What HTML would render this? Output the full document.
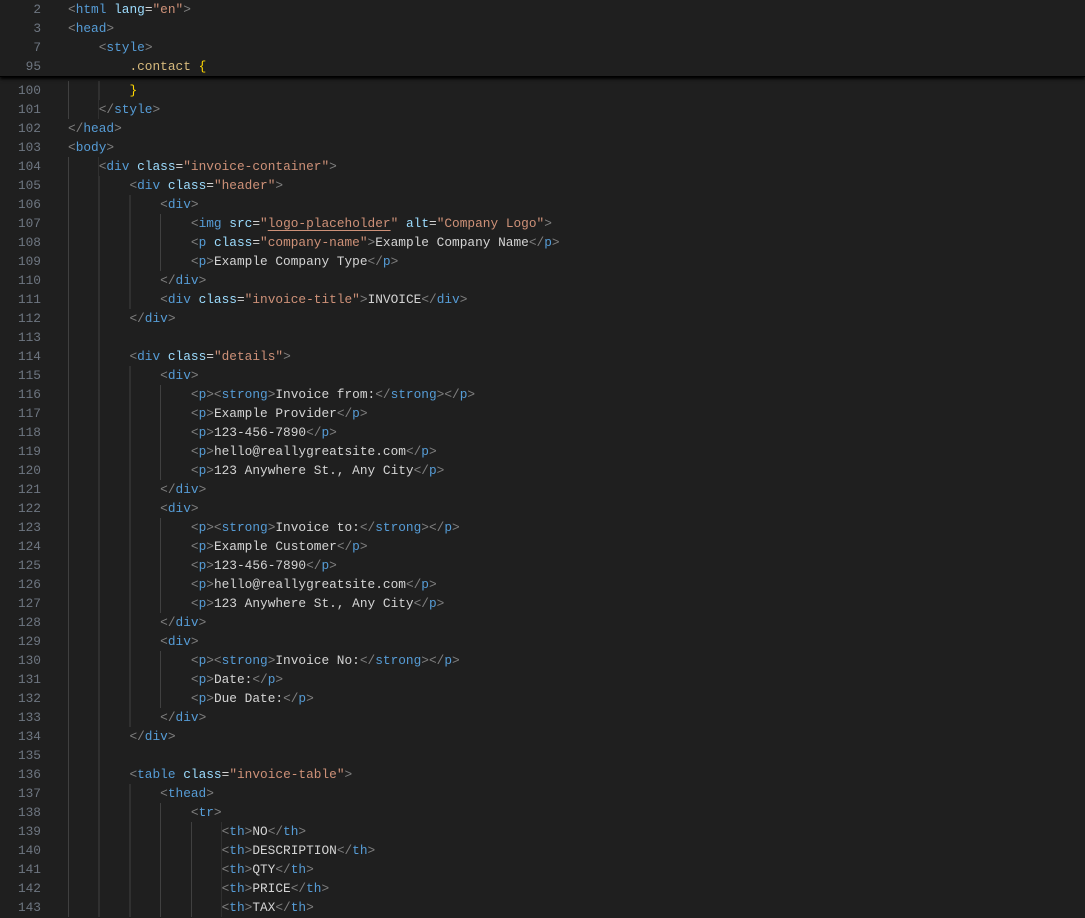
<!DOCTYPE html>
<html><head><meta charset="utf-8"><style>
html,body{margin:0;padding:0;background:#1f1f1f;width:1085px;height:918px;overflow:hidden}
body{font-family:"Liberation Mono",monospace;font-size:12.8px;color:#d4d4d4;position:relative}
.l{height:19px;line-height:19px;white-space:pre;position:relative}
.n{position:absolute;left:0;width:41px;text-align:right;color:#6e7681}
.c{position:absolute;left:68px}
.g{position:absolute;left:68px;top:0;height:19px;background:repeating-linear-gradient(to right,#404040 0 1px,transparent 1px 4ch)}
.t{color:#569cd6}.b{color:#808080}.a{color:#9cdcfe}.s{color:#ce9178}.y{color:#d7ba7d}.k{color:#ffd700}
.sticky{position:absolute;top:0;left:0;width:1085px;height:76px;background:#1f1f1f;z-index:2;box-shadow:0 2px 3px #000;border-bottom:1px solid #000}
.body{position:absolute;top:81px;left:0;width:1085px}
u{text-decoration:underline;text-decoration-color:#ce9178;text-underline-offset:3px}
</style></head><body>
<div class="sticky">
<div class="l"><span class="n">2</span><span class="c"><span class="b">&lt;</span><span class="t">html</span> <span class="a">lang</span>=<span class="s">"en"</span><span class="b">&gt;</span></span></div>
<div class="l"><span class="n">3</span><span class="c"><span class="b">&lt;</span><span class="t">head</span><span class="b">&gt;</span></span></div>
<div class="l"><span class="n">7</span><span class="c">    <span class="b">&lt;</span><span class="t">style</span><span class="b">&gt;</span></span></div>
<div class="l"><span class="n">95</span><span class="c">        <span class="y">.contact</span> <span class="k">{</span></span></div>
</div>
<div class="body">
<div class="l"><span class="n">100</span><span class="g" style="width:8ch"></span><span class="c">        <span class="k">}</span></span></div>
<div class="l"><span class="n">101</span><span class="g" style="width:4ch"></span><span class="c">    <span class="b">&lt;/</span><span class="t">style</span><span class="b">&gt;</span></span></div>
<div class="l"><span class="n">102</span><span class="c"><span class="b">&lt;/</span><span class="t">head</span><span class="b">&gt;</span></span></div>
<div class="l"><span class="n">103</span><span class="c"><span class="b">&lt;</span><span class="t">body</span><span class="b">&gt;</span></span></div>
<div class="l"><span class="n">104</span><span class="g" style="width:4ch"></span><span class="c">    <span class="b">&lt;</span><span class="t">div</span> <span class="a">class</span>=<span class="s">"invoice-container"</span><span class="b">&gt;</span></span></div>
<div class="l"><span class="n">105</span><span class="g" style="width:8ch"></span><span class="c">        <span class="b">&lt;</span><span class="t">div</span> <span class="a">class</span>=<span class="s">"header"</span><span class="b">&gt;</span></span></div>
<div class="l"><span class="n">106</span><span class="g" style="width:12ch"></span><span class="c">            <span class="b">&lt;</span><span class="t">div</span><span class="b">&gt;</span></span></div>
<div class="l"><span class="n">107</span><span class="g" style="width:16ch"></span><span class="c">                <span class="b">&lt;</span><span class="t">img</span> <span class="a">src</span>=<span class="s">"<u>logo-placeholder</u>"</span> <span class="a">alt</span>=<span class="s">"Company Logo"</span><span class="b">&gt;</span></span></div>
<div class="l"><span class="n">108</span><span class="g" style="width:16ch"></span><span class="c">                <span class="b">&lt;</span><span class="t">p</span> <span class="a">class</span>=<span class="s">"company-name"</span><span class="b">&gt;</span>Example Company Name<span class="b">&lt;/</span><span class="t">p</span><span class="b">&gt;</span></span></div>
<div class="l"><span class="n">109</span><span class="g" style="width:16ch"></span><span class="c">                <span class="b">&lt;</span><span class="t">p</span><span class="b">&gt;</span>Example Company Type<span class="b">&lt;/</span><span class="t">p</span><span class="b">&gt;</span></span></div>
<div class="l"><span class="n">110</span><span class="g" style="width:12ch"></span><span class="c">            <span class="b">&lt;/</span><span class="t">div</span><span class="b">&gt;</span></span></div>
<div class="l"><span class="n">111</span><span class="g" style="width:12ch"></span><span class="c">            <span class="b">&lt;</span><span class="t">div</span> <span class="a">class</span>=<span class="s">"invoice-title"</span><span class="b">&gt;</span>INVOICE<span class="b">&lt;/</span><span class="t">div</span><span class="b">&gt;</span></span></div>
<div class="l"><span class="n">112</span><span class="g" style="width:8ch"></span><span class="c">        <span class="b">&lt;/</span><span class="t">div</span><span class="b">&gt;</span></span></div>
<div class="l"><span class="n">113</span><span class="g" style="width:8ch"></span></div>
<div class="l"><span class="n">114</span><span class="g" style="width:8ch"></span><span class="c">        <span class="b">&lt;</span><span class="t">div</span> <span class="a">class</span>=<span class="s">"details"</span><span class="b">&gt;</span></span></div>
<div class="l"><span class="n">115</span><span class="g" style="width:12ch"></span><span class="c">            <span class="b">&lt;</span><span class="t">div</span><span class="b">&gt;</span></span></div>
<div class="l"><span class="n">116</span><span class="g" style="width:16ch"></span><span class="c">                <span class="b">&lt;</span><span class="t">p</span><span class="b">&gt;&lt;</span><span class="t">strong</span><span class="b">&gt;</span>Invoice from:<span class="b">&lt;/</span><span class="t">strong</span><span class="b">&gt;&lt;/</span><span class="t">p</span><span class="b">&gt;</span></span></div>
<div class="l"><span class="n">117</span><span class="g" style="width:16ch"></span><span class="c">                <span class="b">&lt;</span><span class="t">p</span><span class="b">&gt;</span>Example Provider<span class="b">&lt;/</span><span class="t">p</span><span class="b">&gt;</span></span></div>
<div class="l"><span class="n">118</span><span class="g" style="width:16ch"></span><span class="c">                <span class="b">&lt;</span><span class="t">p</span><span class="b">&gt;</span>123-456-7890<span class="b">&lt;/</span><span class="t">p</span><span class="b">&gt;</span></span></div>
<div class="l"><span class="n">119</span><span class="g" style="width:16ch"></span><span class="c">                <span class="b">&lt;</span><span class="t">p</span><span class="b">&gt;</span>hello@reallygreatsite.com<span class="b">&lt;/</span><span class="t">p</span><span class="b">&gt;</span></span></div>
<div class="l"><span class="n">120</span><span class="g" style="width:16ch"></span><span class="c">                <span class="b">&lt;</span><span class="t">p</span><span class="b">&gt;</span>123 Anywhere St., Any City<span class="b">&lt;/</span><span class="t">p</span><span class="b">&gt;</span></span></div>
<div class="l"><span class="n">121</span><span class="g" style="width:12ch"></span><span class="c">            <span class="b">&lt;/</span><span class="t">div</span><span class="b">&gt;</span></span></div>
<div class="l"><span class="n">122</span><span class="g" style="width:12ch"></span><span class="c">            <span class="b">&lt;</span><span class="t">div</span><span class="b">&gt;</span></span></div>
<div class="l"><span class="n">123</span><span class="g" style="width:16ch"></span><span class="c">                <span class="b">&lt;</span><span class="t">p</span><span class="b">&gt;&lt;</span><span class="t">strong</span><span class="b">&gt;</span>Invoice to:<span class="b">&lt;/</span><span class="t">strong</span><span class="b">&gt;&lt;/</span><span class="t">p</span><span class="b">&gt;</span></span></div>
<div class="l"><span class="n">124</span><span class="g" style="width:16ch"></span><span class="c">                <span class="b">&lt;</span><span class="t">p</span><span class="b">&gt;</span>Example Customer<span class="b">&lt;/</span><span class="t">p</span><span class="b">&gt;</span></span></div>
<div class="l"><span class="n">125</span><span class="g" style="width:16ch"></span><span class="c">                <span class="b">&lt;</span><span class="t">p</span><span class="b">&gt;</span>123-456-7890<span class="b">&lt;/</span><span class="t">p</span><span class="b">&gt;</span></span></div>
<div class="l"><span class="n">126</span><span class="g" style="width:16ch"></span><span class="c">                <span class="b">&lt;</span><span class="t">p</span><span class="b">&gt;</span>hello@reallygreatsite.com<span class="b">&lt;/</span><span class="t">p</span><span class="b">&gt;</span></span></div>
<div class="l"><span class="n">127</span><span class="g" style="width:16ch"></span><span class="c">                <span class="b">&lt;</span><span class="t">p</span><span class="b">&gt;</span>123 Anywhere St., Any City<span class="b">&lt;/</span><span class="t">p</span><span class="b">&gt;</span></span></div>
<div class="l"><span class="n">128</span><span class="g" style="width:12ch"></span><span class="c">            <span class="b">&lt;/</span><span class="t">div</span><span class="b">&gt;</span></span></div>
<div class="l"><span class="n">129</span><span class="g" style="width:12ch"></span><span class="c">            <span class="b">&lt;</span><span class="t">div</span><span class="b">&gt;</span></span></div>
<div class="l"><span class="n">130</span><span class="g" style="width:16ch"></span><span class="c">                <span class="b">&lt;</span><span class="t">p</span><span class="b">&gt;&lt;</span><span class="t">strong</span><span class="b">&gt;</span>Invoice No:<span class="b">&lt;/</span><span class="t">strong</span><span class="b">&gt;&lt;/</span><span class="t">p</span><span class="b">&gt;</span></span></div>
<div class="l"><span class="n">131</span><span class="g" style="width:16ch"></span><span class="c">                <span class="b">&lt;</span><span class="t">p</span><span class="b">&gt;</span>Date:<span class="b">&lt;/</span><span class="t">p</span><span class="b">&gt;</span></span></div>
<div class="l"><span class="n">132</span><span class="g" style="width:16ch"></span><span class="c">                <span class="b">&lt;</span><span class="t">p</span><span class="b">&gt;</span>Due Date:<span class="b">&lt;/</span><span class="t">p</span><span class="b">&gt;</span></span></div>
<div class="l"><span class="n">133</span><span class="g" style="width:12ch"></span><span class="c">            <span class="b">&lt;/</span><span class="t">div</span><span class="b">&gt;</span></span></div>
<div class="l"><span class="n">134</span><span class="g" style="width:8ch"></span><span class="c">        <span class="b">&lt;/</span><span class="t">div</span><span class="b">&gt;</span></span></div>
<div class="l"><span class="n">135</span><span class="g" style="width:8ch"></span></div>
<div class="l"><span class="n">136</span><span class="g" style="width:8ch"></span><span class="c">        <span class="b">&lt;</span><span class="t">table</span> <span class="a">class</span>=<span class="s">"invoice-table"</span><span class="b">&gt;</span></span></div>
<div class="l"><span class="n">137</span><span class="g" style="width:12ch"></span><span class="c">            <span class="b">&lt;</span><span class="t">thead</span><span class="b">&gt;</span></span></div>
<div class="l"><span class="n">138</span><span class="g" style="width:16ch"></span><span class="c">                <span class="b">&lt;</span><span class="t">tr</span><span class="b">&gt;</span></span></div>
<div class="l"><span class="n">139</span><span class="g" style="width:20ch"></span><span class="c">                    <span class="b">&lt;</span><span class="t">th</span><span class="b">&gt;</span>NO<span class="b">&lt;/</span><span class="t">th</span><span class="b">&gt;</span></span></div>
<div class="l"><span class="n">140</span><span class="g" style="width:20ch"></span><span class="c">                    <span class="b">&lt;</span><span class="t">th</span><span class="b">&gt;</span>DESCRIPTION<span class="b">&lt;/</span><span class="t">th</span><span class="b">&gt;</span></span></div>
<div class="l"><span class="n">141</span><span class="g" style="width:20ch"></span><span class="c">                    <span class="b">&lt;</span><span class="t">th</span><span class="b">&gt;</span>QTY<span class="b">&lt;/</span><span class="t">th</span><span class="b">&gt;</span></span></div>
<div class="l"><span class="n">142</span><span class="g" style="width:20ch"></span><span class="c">                    <span class="b">&lt;</span><span class="t">th</span><span class="b">&gt;</span>PRICE<span class="b">&lt;/</span><span class="t">th</span><span class="b">&gt;</span></span></div>
<div class="l"><span class="n">143</span><span class="g" style="width:20ch"></span><span class="c">                    <span class="b">&lt;</span><span class="t">th</span><span class="b">&gt;</span>TAX<span class="b">&lt;/</span><span class="t">th</span><span class="b">&gt;</span></span></div>
</div>
</body></html>
